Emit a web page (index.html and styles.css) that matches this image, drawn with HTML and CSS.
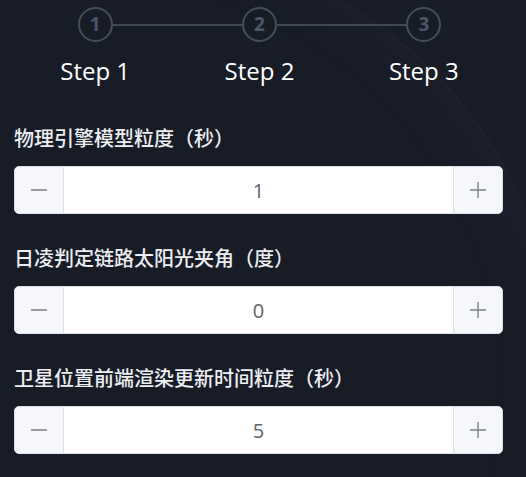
FILE: index.html
```html
<!DOCTYPE html>
<html lang="zh-CN">
<head>
<meta charset="utf-8">
<title>Settings</title>
<link rel="stylesheet" href="styles.css">
</head>
<body>
<div class="page">
  <div class="planet"></div>
  <div class="steps">
    <div class="step">
      <div class="step-head"><span class="line line-right"></span><span class="circle">1</span></div>
      <div class="step-title">Step 1</div>
    </div>
    <div class="step">
      <div class="step-head"><span class="line line-left"></span><span class="line line-right"></span><span class="circle">2</span></div>
      <div class="step-title">Step 2</div>
    </div>
    <div class="step">
      <div class="step-head"><span class="line line-left"></span><span class="circle">3</span></div>
      <div class="step-title">Step 3</div>
    </div>
  </div>

  <form class="form">
    <div class="item">
      <label class="label">物理引擎模型粒度（秒）</label>
      <div class="number">
        <span class="btn minus"><svg width="18" height="18" viewBox="0 0 18 18"><path d="M1 9h16" stroke="currentColor" stroke-width="1.4"/></svg></span>
        <span class="value">1</span>
        <span class="btn plus"><svg width="18" height="18" viewBox="0 0 18 18"><path d="M1 9h16M9 1v16" stroke="currentColor" stroke-width="1.4"/></svg></span>
      </div>
    </div>
    <div class="item">
      <label class="label">日凌判定链路太阳光夹角（度）</label>
      <div class="number">
        <span class="btn minus"><svg width="18" height="18" viewBox="0 0 18 18"><path d="M1 9h16" stroke="currentColor" stroke-width="1.4"/></svg></span>
        <span class="value">0</span>
        <span class="btn plus"><svg width="18" height="18" viewBox="0 0 18 18"><path d="M1 9h16M9 1v16" stroke="currentColor" stroke-width="1.4"/></svg></span>
      </div>
    </div>
    <div class="item">
      <label class="label">卫星位置前端渲染更新时间粒度（秒）</label>
      <div class="number">
        <span class="btn minus"><svg width="18" height="18" viewBox="0 0 18 18"><path d="M1 9h16" stroke="currentColor" stroke-width="1.4"/></svg></span>
        <span class="value">5</span>
        <span class="btn plus"><svg width="18" height="18" viewBox="0 0 18 18"><path d="M1 9h16M9 1v16" stroke="currentColor" stroke-width="1.4"/></svg></span>
      </div>
    </div>
  </form>
</div>
</body>
</html>
```

FILE: styles.css
```css
html, body {
  margin: 0;
  padding: 0;
}
body {
  width: 526px;
  height: 477px;
  overflow: hidden;
  background: #181c27;
  font-family: "Open Sans", "Noto Sans CJK SC", sans-serif;
}
.page {
  position: relative;
  height: 477px;
  padding-top: 7px;
  box-sizing: border-box;
  overflow: hidden;
}
.planet {
  position: absolute;
  left: -320px;
  top: -60px;
  width: 880px;
  height: 880px;
  border-radius: 50%;
  box-shadow: inset -1px 1px 2px rgba(120, 130, 150, 0.06), inset -30px 10px 60px rgba(90, 100, 120, 0.04);
  pointer-events: none;
}
.steps {
  position: relative;
  display: grid;
  grid-template-columns: repeat(3, 1fr);
  margin: 0 20px 0 13px;
}
.step {
  display: flex;
  flex-direction: column;
  align-items: center;
}
.step-head {
  position: relative;
  width: 100%;
  display: flex;
  justify-content: center;
}
.circle {
  position: relative;
  z-index: 1;
  width: 35px;
  height: 35px;
  box-sizing: border-box;
  border: 2.5px solid #434e5d;
  border-radius: 50%;
  display: flex;
  align-items: center;
  justify-content: center;
  color: #4c5869;
  font-weight: 700;
  font-size: 19px;
  line-height: 1;
}
.line {
  position: absolute;
  top: 17px;
  height: 2px;
  background: #3f4957;
}
.line-right {
  left: calc(50% + 17px);
  right: 0;
}
.line-left {
  left: 0;
  right: calc(50% + 17px);
}
.step-title {
  margin-top: 13px;
  color: #ffffff;
  font-size: 24px;
  line-height: 32px;
}
.form {
  position: relative;
  margin: 37px 23px 0 14px;
}
.item {
  margin-bottom: 30px;
}
.label {
  display: block;
  height: 28px;
  line-height: 28px;
  font-size: 20px;
  font-weight: 500;
  color: #eceef2;
  font-family: "Noto Sans CJK SC", sans-serif;
  margin-bottom: 14px;
}
.number {
  display: flex;
  height: 48px;
  box-sizing: border-box;
  border: 1px solid #dcdfe6;
  border-radius: 5px;
  background: #ffffff;
  overflow: hidden;
}
.btn {
  width: 48px;
  flex: none;
  display: flex;
  align-items: center;
  justify-content: center;
  background: #f5f7fa;
  color: #7c7f86;
}
.minus {
  border-right: 1px solid #dcdfe6;
}
.plus {
  border-left: 1px solid #dcdfe6;
}
.value {
  flex: 1;
  display: flex;
  align-items: center;
  justify-content: center;
  font-size: 20px;
  color: #606266;
}
```
